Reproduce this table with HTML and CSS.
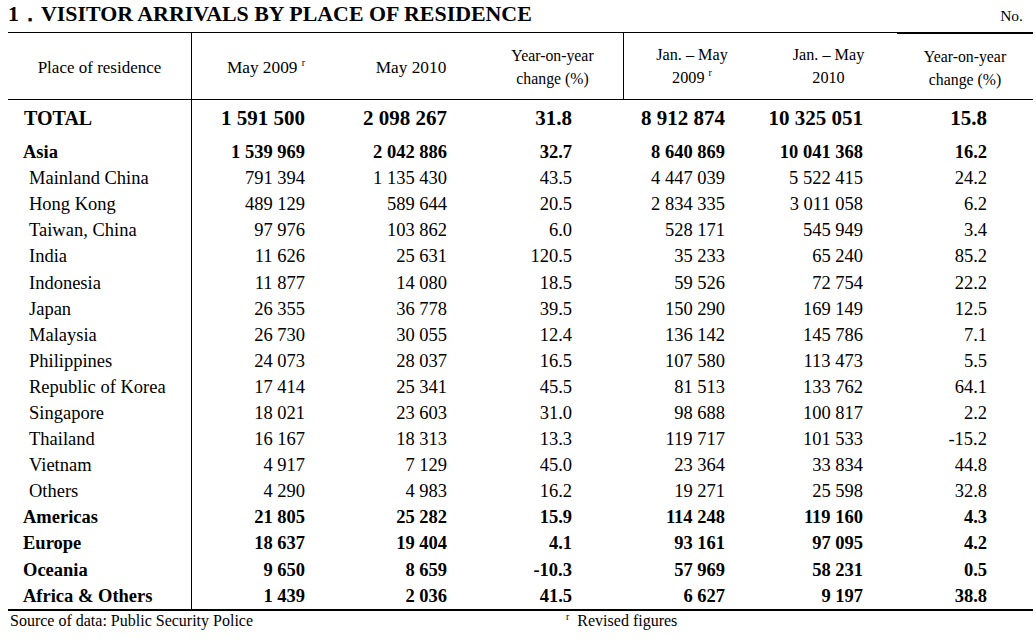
FILE: index.html
```html
<!DOCTYPE html>
<html lang="en">
<head>
<meta charset="utf-8">
<title>Visitor arrivals by place of residence</title>
<link rel="stylesheet" href="styles.css">
</head>
<body>
<div class="page">
  <div class="title-row">
    <h1 class="title">1．VISITOR ARRIVALS BY PLACE OF RESIDENCE</h1>
    <span class="unit">No.</span>
  </div>
  <table class="stats">
    <colgroup>
      <col class="c0"><col class="c1"><col class="c2"><col class="c3"><col class="c4"><col class="c5"><col class="c6">
    </colgroup>
    <thead>
      <tr>
        <th class="place">Place of residence</th>
        <th class="month">May 2009 <sup>r</sup></th>
        <th class="month">May 2010</th>
        <th class="yoy split">Year-on-year<br>change (%)</th>
        <th class="range">Jan. – May<br>2009 <sup>r</sup></th>
        <th class="range">Jan. – May<br>2010</th>
        <th class="yoy last-col">Year-on-year<br>change (%)</th>
      </tr>
    </thead>
    <tbody>
      <tr class="total"><td>TOTAL</td><td>1 591 500</td><td>2 098 267</td><td>31.8</td><td>8 912 874</td><td>10 325 051</td><td>15.8</td></tr>
      <tr class="cat first"><td>Asia</td><td>1 539 969</td><td>2 042 886</td><td>32.7</td><td>8 640 869</td><td>10 041 368</td><td>16.2</td></tr>
      <tr class="sub"><td>Mainland China</td><td>791 394</td><td>1 135 430</td><td>43.5</td><td>4 447 039</td><td>5 522 415</td><td>24.2</td></tr>
      <tr class="sub"><td>Hong Kong</td><td>489 129</td><td>589 644</td><td>20.5</td><td>2 834 335</td><td>3 011 058</td><td>6.2</td></tr>
      <tr class="sub"><td>Taiwan, China</td><td>97 976</td><td>103 862</td><td>6.0</td><td>528 171</td><td>545 949</td><td>3.4</td></tr>
      <tr class="sub"><td>India</td><td>11 626</td><td>25 631</td><td>120.5</td><td>35 233</td><td>65 240</td><td>85.2</td></tr>
      <tr class="sub"><td>Indonesia</td><td>11 877</td><td>14 080</td><td>18.5</td><td>59 526</td><td>72 754</td><td>22.2</td></tr>
      <tr class="sub"><td>Japan</td><td>26 355</td><td>36 778</td><td>39.5</td><td>150 290</td><td>169 149</td><td>12.5</td></tr>
      <tr class="sub"><td>Malaysia</td><td>26 730</td><td>30 055</td><td>12.4</td><td>136 142</td><td>145 786</td><td>7.1</td></tr>
      <tr class="sub"><td>Philippines</td><td>24 073</td><td>28 037</td><td>16.5</td><td>107 580</td><td>113 473</td><td>5.5</td></tr>
      <tr class="sub"><td>Republic of Korea</td><td>17 414</td><td>25 341</td><td>45.5</td><td>81 513</td><td>133 762</td><td>64.1</td></tr>
      <tr class="sub"><td>Singapore</td><td>18 021</td><td>23 603</td><td>31.0</td><td>98 688</td><td>100 817</td><td>2.2</td></tr>
      <tr class="sub"><td>Thailand</td><td>16 167</td><td>18 313</td><td>13.3</td><td>119 717</td><td>101 533</td><td>-15.2</td></tr>
      <tr class="sub"><td>Vietnam</td><td>4 917</td><td>7 129</td><td>45.0</td><td>23 364</td><td>33 834</td><td>44.8</td></tr>
      <tr class="sub"><td>Others</td><td>4 290</td><td>4 983</td><td>16.2</td><td>19 271</td><td>25 598</td><td>32.8</td></tr>
      <tr class="cat"><td>Americas</td><td>21 805</td><td>25 282</td><td>15.9</td><td>114 248</td><td>119 160</td><td>4.3</td></tr>
      <tr class="cat"><td>Europe</td><td>18 637</td><td>19 404</td><td>4.1</td><td>93 161</td><td>97 095</td><td>4.2</td></tr>
      <tr class="cat"><td>Oceania</td><td>9 650</td><td>8 659</td><td>-10.3</td><td>57 969</td><td>58 231</td><td>0.5</td></tr>
      <tr class="cat last"><td>Africa &amp; Others</td><td>1 439</td><td>2 036</td><td>41.5</td><td>6 627</td><td>9 197</td><td>38.8</td></tr>
    </tbody>
  </table>
  <div class="notes">
    <span class="source">Source of data: Public Security Police</span>
    <span class="revised"><sup>r</sup> Revised figures</span>
  </div>
</div>
</body>
</html>
```

FILE: styles.css
```css
html, body {
  margin: 0;
  padding: 0;
  background: #fff;
}

body {
  font-family: "Liberation Serif", "Times New Roman", serif;
  color: #000;
}

.page {
  width: 1025px;
  padding-left: 8px;
}

.title-row {
  height: 32px;
  display: flex;
  justify-content: space-between;
  align-items: flex-start;
}

.title {
  margin: 0;
  padding-top: 2px;
  font-size: 21.9px;
  font-weight: bold;
  line-height: 24px;
}

.unit {
  font-size: 15.5px;
  line-height: 18px;
  padding-top: 7px;
  padding-right: 10px;
}

.stats {
  width: 1025px;
  border-collapse: separate;
  border-spacing: 0;
  table-layout: fixed;
}

.c0 { width: 184px; }
.c1 { width: 148px; }
.c2 { width: 142px; }
.c3 { width: 142px; }
.c4 { width: 136px; }
.c5 { width: 137px; }
.c6 { width: 136px; }

.stats th {
  font-weight: normal;
  font-size: 16px;
  line-height: 23px;
  height: 63px;
  padding: 2px 0 0;
  text-align: center;
  vertical-align: middle;
  border-top: 1px solid #000;
  border-bottom: 1px solid #000;
}

.stats th.place {
  font-size: 17px;
  border-right: 1px solid #000;
}

.stats th.month {
  font-size: 17.3px;
}

.stats th.yoy {
  font-size: 15.8px;
}

.stats th.range {
  font-size: 16.2px;
}

.stats th.split {
  border-right: 1px solid #000;
}

.stats th.last-col {
  border-top: 2px solid #000;
}

.stats sup {
  font-size: 10px;
  vertical-align: 7px;
  line-height: 0;
}

.stats td {
  padding: 0;
  font-size: 18.5px;
  line-height: 20px;
  height: 26.1px;
  text-align: right;
  vertical-align: middle;
  white-space: nowrap;
}

.stats td:first-child {
  text-align: left;
  border-right: 1px solid #000;
}

.stats td:nth-child(2) { padding-right: 35px; }
.stats td:nth-child(3) { padding-right: 35px; }
.stats td:nth-child(4) { padding-right: 52px; }
.stats td:nth-child(5) { padding-right: 35px; }
.stats td:nth-child(6) { padding-right: 34px; }
.stats td:nth-child(7) { padding-right: 46px; }

.stats tr.total td {
  font-size: 21px;
  font-weight: bold;
  height: 36px;
  padding-bottom: 3px;
}

.stats tr.total td:first-child {
  font-size: 20px;
  padding-left: 16px;
}

.stats tr.cat td {
  font-weight: bold;
}

.stats tr.cat td:first-child {
  padding-left: 15px;
}

.stats tr.sub td:first-child {
  padding-left: 21px;
}

.stats tr.last td {
  border-bottom: 2px solid #000;
}

.notes {
  display: flex;
  font-size: 16px;
  line-height: 20px;
  padding-top: 0;
}

.source {
  padding-left: 2px;
  width: 556px;
}

.revised sup {
  font-size: 10px;
  vertical-align: 6px;
  line-height: 0;
  margin-right: 4px;
}
```
